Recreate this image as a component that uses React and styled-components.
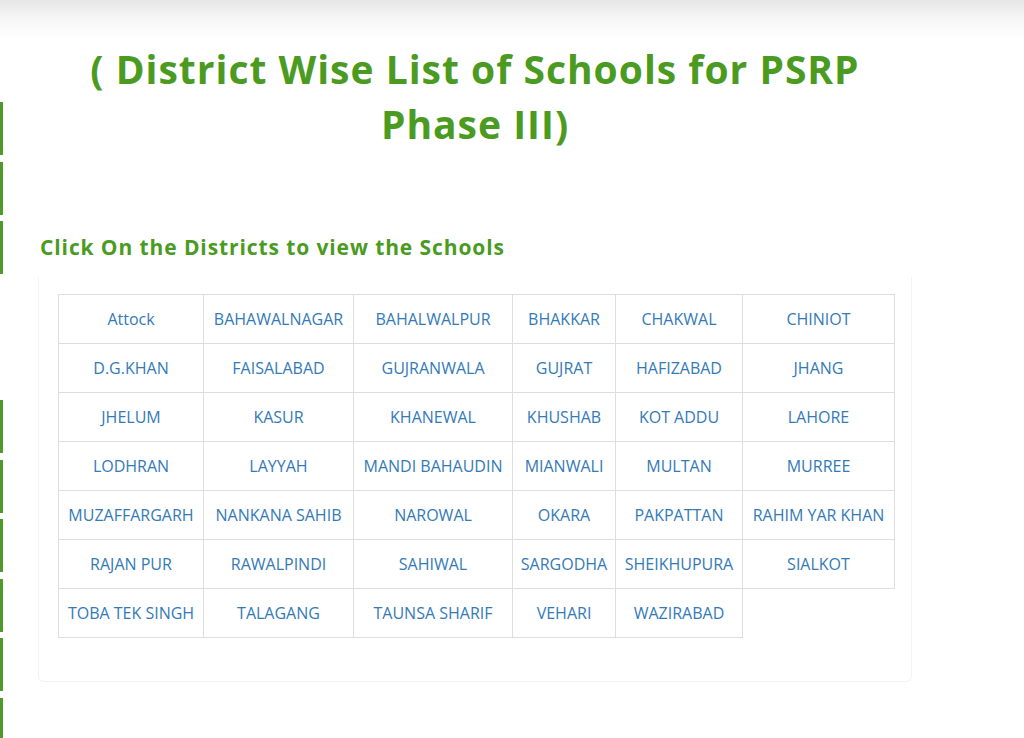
import React from "react";
import styled, { createGlobalStyle } from "styled-components";

const rows = [
  ["Attock", "BAHAWALNAGAR", "BAHALWALPUR", "BHAKKAR", "CHAKWAL", "CHINIOT"],
  ["D.G.KHAN", "FAISALABAD", "GUJRANWALA", "GUJRAT", "HAFIZABAD", "JHANG"],
  ["JHELUM", "KASUR", "KHANEWAL", "KHUSHAB", "KOT ADDU", "LAHORE"],
  ["LODHRAN", "LAYYAH", "MANDI BAHAUDIN", "MIANWALI", "MULTAN", "MURREE"],
  ["MUZAFFARGARH", "NANKANA SAHIB", "NAROWAL", "OKARA", "PAKPATTAN", "RAHIM YAR KHAN"],
  ["RAJAN PUR", "RAWALPINDI", "SAHIWAL", "SARGODHA", "SHEIKHUPURA", "SIALKOT"],
  ["TOBA TEK SINGH", "TALAGANG", "TAUNSA SHARIF", "VEHARI", "WAZIRABAD"],
];

const colWidths = [145, 150, 159, 103, 127, 152];

// which slots on the side strip actually show a bar
const sideBars = [true, true, true, false, false, true, true, true, true, true, true];

const App = () => (
  <>
    <GlobalStyle />
    <TopShade />
    <SideStrip>
      {sideBars.map((on, i) => (
        <SideBar key={i} $visible={on} />
      ))}
    </SideStrip>
    <Content>
      <Title>( District Wise List of Schools for PSRP Phase III)</Title>
      <SubTitle>Click On the Districts to view the Schools</SubTitle>
      <Card>
        <DistrictTable>
          <colgroup>
            {colWidths.map((w, i) => (
              <col key={i} style={{ width: w }} />
            ))}
          </colgroup>
          <tbody>
            {rows.map((row, r) => (
              <tr key={r}>
                {row.map((name) => (
                  <Cell key={name}>
                    <DistrictLink href="#">{name}</DistrictLink>
                  </Cell>
                ))}
              </tr>
            ))}
          </tbody>
        </DistrictTable>
      </Card>
    </Content>
  </>
);

export default App;

const GlobalStyle = createGlobalStyle`
  html, body {
    margin: 0;
    padding: 0;
    background: #fff;
    font-family: "Open Sans", "Liberation Sans", sans-serif;
  }
`;

const TopShade = styled.div`
  height: 40px;
  background: linear-gradient(to bottom, #e6e6e6 0%, #f6f6f6 45%, #ffffff 100%);
`;

const SideStrip = styled.div`
  position: fixed;
  left: 0;
  top: 102px;
  width: 3px;
  display: flex;
  flex-direction: column;
  gap: 6.6px;
`;

const SideBar = styled.div`
  width: 3px;
  height: 53px;
  background: ${(p) => (p.$visible ? "#4f9a2a" : "transparent")};
`;

const Content = styled.div`
  margin-left: 38px;
  width: 874px;
  padding-top: 1px;
`;

const Title = styled.h1`
  margin: 0 auto;
  width: 800px;
  text-align: center;
  font-size: 39px;
  line-height: 55px;
  font-weight: 700;
  letter-spacing: 1px;
  color: #4a9b1f;
`;

const SubTitle = styled.h3`
  margin: 81px 0 15px 2px;
  font-size: 21px;
  line-height: 30px;
  font-weight: 700;
  letter-spacing: 0.9px;
  color: #4a9b1f;
`;

const Card = styled.div`
  box-sizing: border-box;
  padding: 17px 0 43px 19px;
  border: 1px solid #f3f3f3;
  border-top: none;
  border-radius: 0 0 6px 6px;
`;

const DistrictTable = styled.table`
  border-collapse: collapse;
  table-layout: fixed;
  width: 837px;
`;

const Cell = styled.td`
  height: 48px;
  padding: 0 4px;
  border: 1px solid #dedede;
  text-align: center;
  vertical-align: middle;
  white-space: nowrap;
  font-size: 16px;
`;

const DistrictLink = styled.a`
  color: #337ab7;
  text-decoration: none;
`;
